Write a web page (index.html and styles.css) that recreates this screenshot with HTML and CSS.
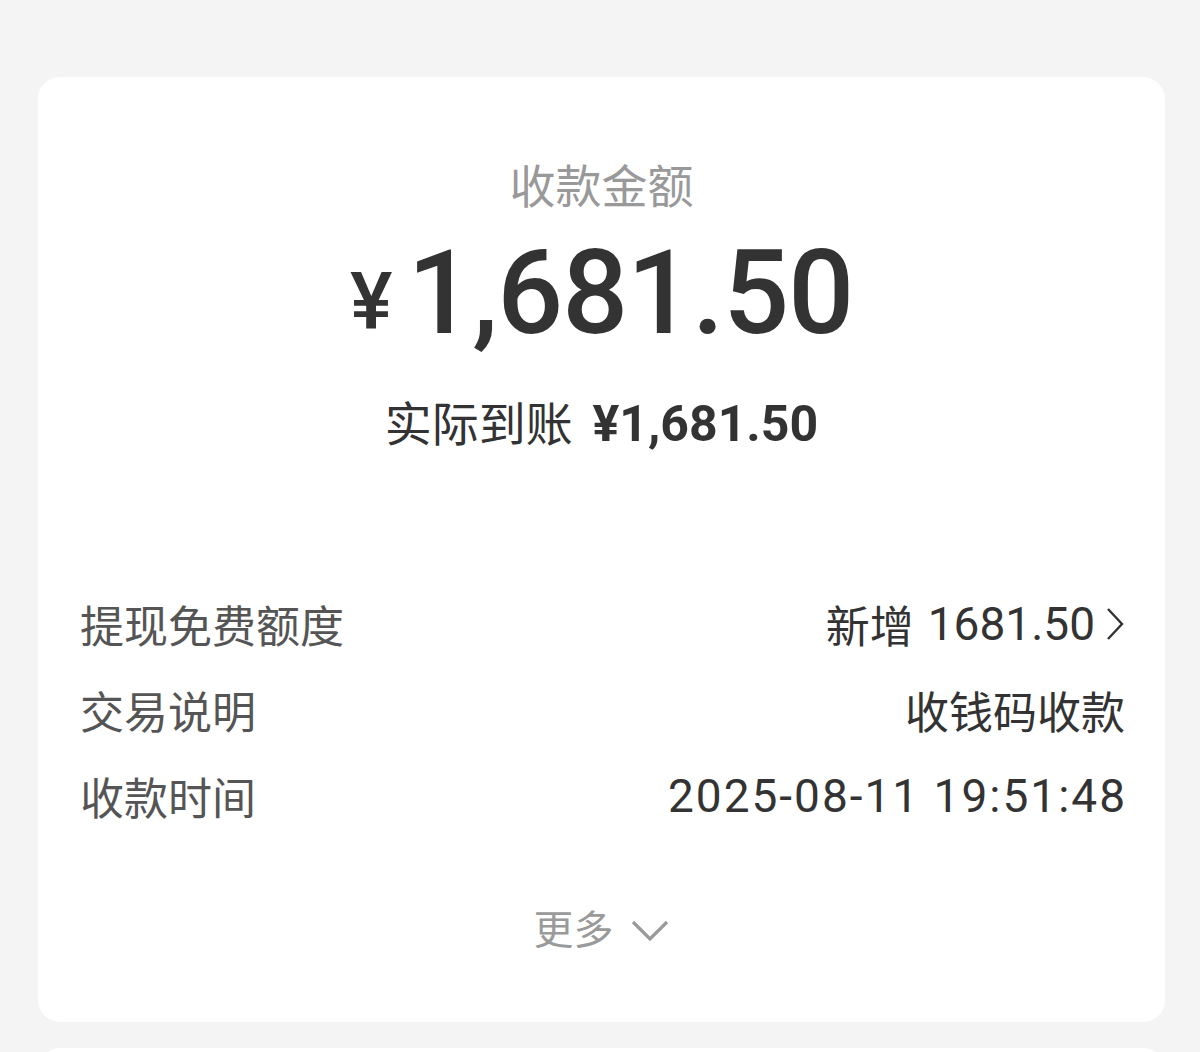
FILE: index.html
```html
<!DOCTYPE html>
<html lang="zh-CN">
<head>
    <meta charset="UTF-8">
    <meta name="viewport" content="width=device-width, initial-scale=1.0">
    <title>收款详情</title>
    <link rel="stylesheet" href="styles.css">
</head>
<body>
    <div class="card">
        <div class="titulo">收款金额</div>
        <div class="valor"><span class="moeda">¥</span>1,681.50</div>
        <div class="real">实际到账 <span class="real-num">¥1,681.50</span></div>

        <div class="linhas">
            <div class="linha">
                <span class="rotulo">提现免费额度</span>
                <span class="info">新增 <span class="num">1681.50</span>
                    <svg class="seta" width="20" height="34" viewBox="0 0 20 34"><path d="M3 2 L17 17 L3 32" fill="none" stroke="#333" stroke-width="2.4"/></svg>
                </span>
            </div>
            <div class="linha">
                <span class="rotulo">交易说明</span>
                <span class="info">收钱码收款</span>
            </div>
            <div class="linha">
                <span class="rotulo">收款时间</span>
                <span class="info num data">2025-08-11 19:51:48</span>
            </div>
        </div>

        <div class="mais">更多
            <svg width="40" height="24" viewBox="0 0 40 24"><path d="M3 3 L20 20 L37 3" fill="none" stroke="#9a9a9a" stroke-width="3.2"/></svg>
        </div>
    </div>
    <div class="card proximo"></div>
</body>
</html>
```

FILE: styles.css
```css
body {
    margin: 0;
    padding: 0;
    background-color: #f4f4f4;
    font-family: Roboto, "Noto Sans CJK SC", sans-serif;
    color: #333;
    overflow: hidden;
}
.card {
    margin: 77px 35px 0 38px;
    padding: 80px 0 61px;
    background-color: #ffffff;
    border-radius: 22px;
    text-align: center;
}
.proximo {
    margin-top: 26px;
    height: 200px;
    padding: 0;
}
.titulo {
    font-size: 46px;
    line-height: 60px;
    color: #999;
}
.valor {
    margin-top: 11px;
    font-size: 116px;
    line-height: 130px;
    font-weight: 500;
    letter-spacing: -1px;
    color: #333;
}
.moeda {
    font-size: 80px;
    margin-right: 16px;
    position: relative;
    top: -4px;
}
.real {
    margin-top: 23px;
    font-size: 47px;
    line-height: 60px;
    color: #333;
}
.real-num {
    font-size: 50px;
    font-weight: 700;
    margin-left: 8px;
}
.linhas {
    margin-top: 126px;
    padding: 0 40px 0 42px;
}
.linha {
    display: flex;
    justify-content: space-between;
    align-items: center;
    height: 86px;
}
.rotulo {
    font-size: 44px;
    color: #555;
}
.info {
    display: flex;
    align-items: center;
    font-size: 44px;
    color: #333;
}
.num {
    font-size: 46px;
    margin-left: 14px;
}
.data {
    letter-spacing: 2px;
    margin-right: -2px;
}
.seta {
    margin-left: 10px;
}
.mais {
    margin-top: 62px;
    font-size: 40px;
    line-height: 60px;
    color: #9a9a9a;
    display: flex;
    justify-content: center;
    align-items: center;
    gap: 16px;
}
```
